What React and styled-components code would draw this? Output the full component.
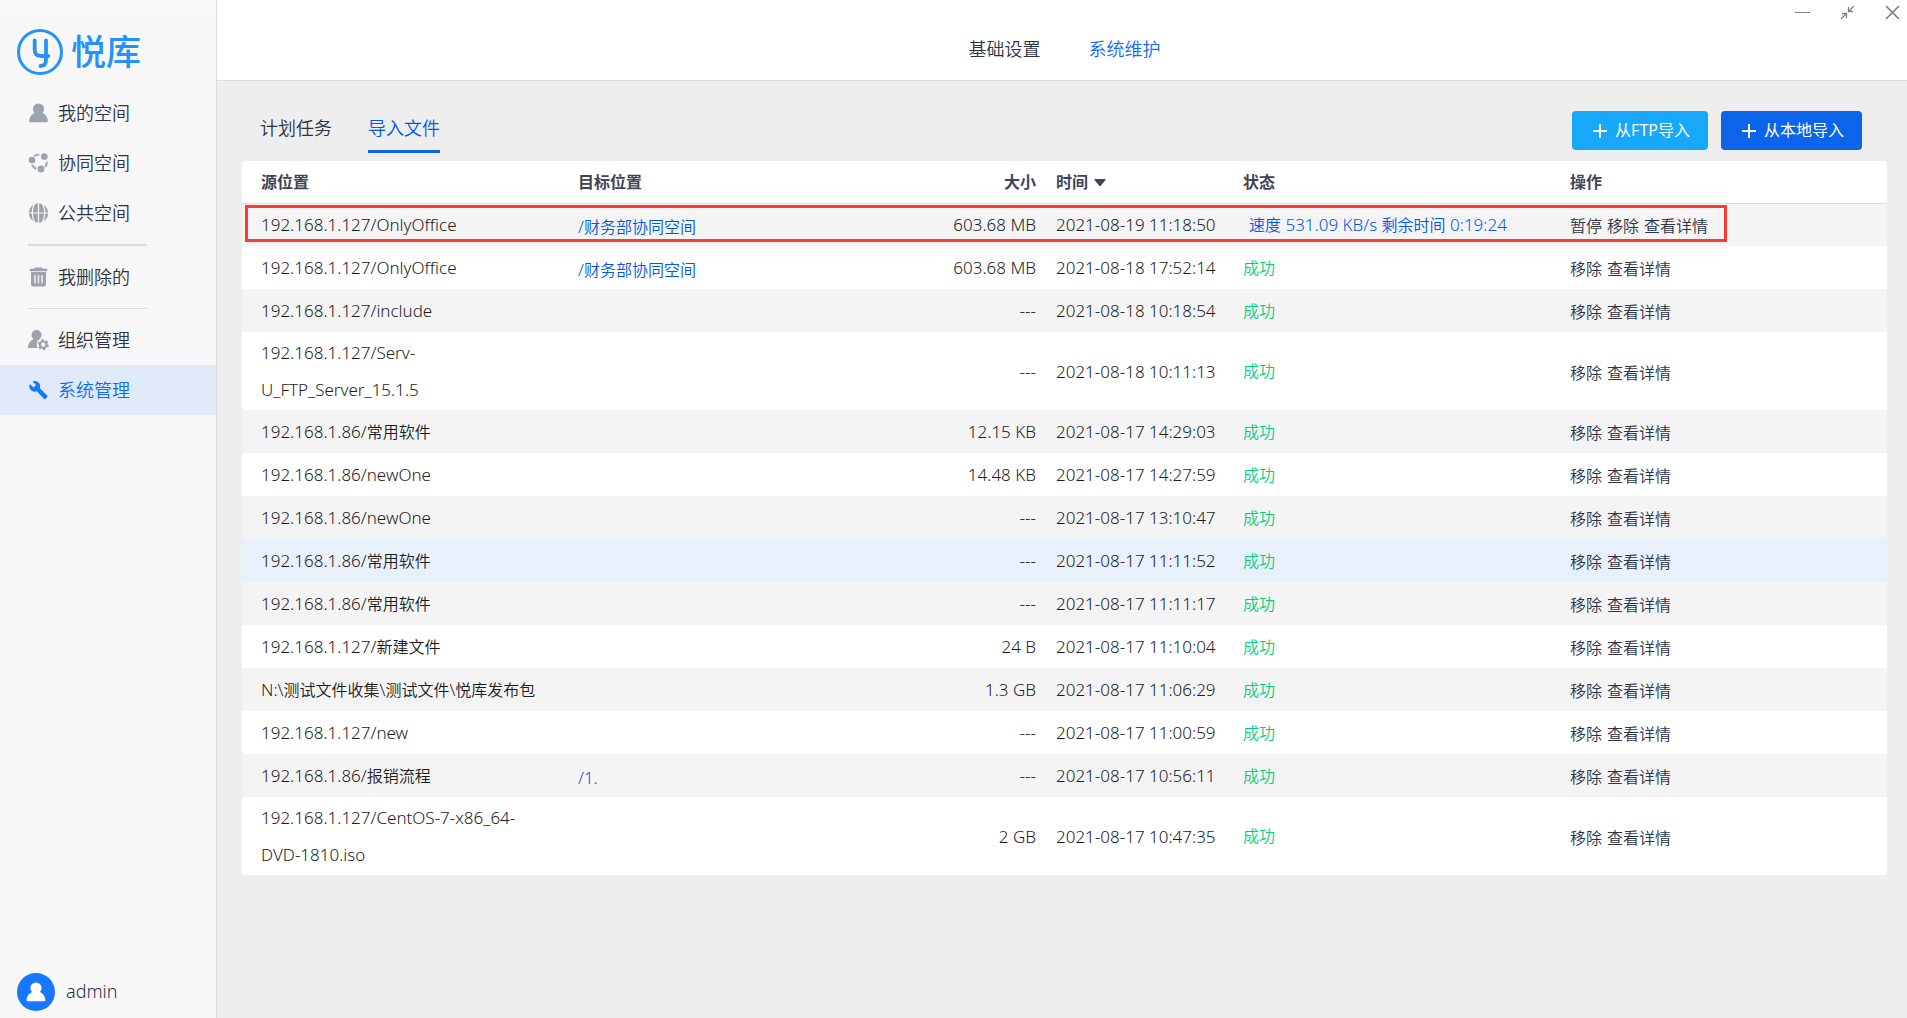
import React, { useState } from 'react'
import styled, { createGlobalStyle } from 'styled-components'

const GlobalStyle = createGlobalStyle`
  * {
    box-sizing: border-box;
  }

  body {
    margin: 0;
    color: #1c1c1c;
    background: #eee;
    font-family: "Noto Sans", "Noto Sans CJK SC", sans-serif;
    font-size: 16px;
    font-weight: 350;
  }

  button {
    padding: 0;
    border: 0;
    background: none;
    color: inherit;
    font: inherit;
    cursor: pointer;
  }

  a {
    text-decoration: none;
  }
`

const tasks = [
  { source: '192.168.1.127/OnlyOffice', target: '/财务部协同空间', size: '603.68 MB', time: '2021-08-19 11:18:50', progress: '速度 531.09 KB/s 剩余时间 0:19:24' },
  { source: '192.168.1.127/OnlyOffice', target: '/财务部协同空间', size: '603.68 MB', time: '2021-08-18 17:52:14' },
  { source: '192.168.1.127/include', size: '---', time: '2021-08-18 10:18:54' },
  { source: '192.168.1.127/Serv-U_FTP_Server_15.1.5', size: '---', time: '2021-08-18 10:11:13' },
  { source: '192.168.1.86/常用软件', size: '12.15 KB', time: '2021-08-17 14:29:03' },
  { source: '192.168.1.86/newOne', size: '14.48 KB', time: '2021-08-17 14:27:59' },
  { source: '192.168.1.86/newOne', size: '---', time: '2021-08-17 13:10:47' },
  { source: '192.168.1.86/常用软件', size: '---', time: '2021-08-17 11:11:52', active: true },
  { source: '192.168.1.86/常用软件', size: '---', time: '2021-08-17 11:11:17' },
  { source: '192.168.1.127/新建文件', size: '24 B', time: '2021-08-17 11:10:04' },
  { source: 'N:\\测试文件收集\\测试文件\\悦库发布包', size: '1.3 GB', time: '2021-08-17 11:06:29' },
  { source: '192.168.1.127/new', size: '---', time: '2021-08-17 11:00:59' },
  { source: '192.168.1.86/报销流程', target: '/1.', size: '---', time: '2021-08-17 10:56:11' },
  { source: '192.168.1.127/CentOS-7-x86_64-DVD-1810.iso', size: '2 GB', time: '2021-08-17 10:47:35' },
]

// Latin runs are set one pixel larger than the Chinese ones
const mixed = (text) =>
  text.split(/([\u4e00-\u9fff]+)/).map((part, index) =>
    index % 2 ? <Han key={index}>{part}</Han> : part
  )

const UserIcon = ({ size = 20 }) => (
  <svg width={size} height={size} viewBox="0 0 20 20" fill="currentColor" aria-hidden="true">
    <circle cx="10" cy="6" r="5.6" />
    <path d="M6.8 9.6h6.4c3.4 1.6 6 4.6 6.2 8.2 0 1-.3 1.4-1.2 1.4H1.8c-.9 0-1.2-.4-1.2-1.4.2-3.6 2.8-6.6 6.2-8.2z" />
  </svg>
)

const ShareIcon = () => (
  <svg width="20" height="20" viewBox="0 0 20 20" fill="none" aria-hidden="true">
    <path d="M5.6 3.1Q8.3 1.300 10.700 1.900M18.300 8.700Q18.700 11.800 16.800 14M3.400 11.600Q4.600 14.400 7.800 15.900" stroke="currentColor" strokeWidth="1.900" />
    <circle cx="15.800" cy="3.600" r="3.400" fill="currentColor" />
    <circle cx="3.500" cy="7" r="3.300" fill="currentColor" />
    <circle cx="12.500" cy="16" r="3.400" fill="currentColor" />
  </svg>
)

const GlobeIcon = () => (
  <svg width="20" height="20" viewBox="0 0 20 20" fill="none" stroke="#f7f7f7" strokeWidth="1.200" aria-hidden="true">
    <circle cx="10" cy="10" r="9.700" fill="currentColor" stroke="none" />
    <path d="M10 0v20M0 10h20M6.500 0C2.800 6 2.800 14 6.500 20M13.500 0c3.700 6 3.700 14 0 20" />
  </svg>
)

const TrashIcon = () => (
  <svg width="20" height="20" viewBox="0 0 20 20" fill="currentColor" aria-hidden="true">
    <path d="M6.500.6h7l.8 1.200h3.500c.7 0 1 .4 1 1v1.400H1.200V2.800c0-.6.3-1 1-1h3.500z" />
    <path fillRule="evenodd" d="M2.500 5h15v12.200c0 1.400-.9 2.200-2.200 2.200H4.700c-1.300 0-2.200-.8-2.200-2.200zM5.800 8.200v8h1.400v-8zm3.500 0v8h1.400v-8zm3.500 0v8h1.400v-8z" />
  </svg>
)

const OrgIcon = () => (
  <svg width="21" height="20" viewBox="0 0 21 20" fill="currentColor" aria-hidden="true">
    <circle cx="8.500" cy="5" r="5" />
    <path d="M5.500 9h6c-2.600 1.600-3.500 5-2 9H0c0-4.200 2.400-7.400 5.500-9z" />
    <circle cx="15.200" cy="14.700" r="3.200" fill="none" stroke="currentColor" strokeWidth="2.200" />
    <circle cx="15.200" cy="14.700" r="4.700" fill="none" stroke="currentColor" strokeWidth="1.800" strokeDasharray="2.460 2.460" />
  </svg>
)

const WrenchIcon = () => (
  <svg width="20" height="20" viewBox="0 0 24 24" fill="currentColor" aria-hidden="true">
    <path d="M22.700 19l-9.100-9.100c.9-2.300.4-5-1.500-6.900-2-2-5-2.400-7.400-1.300L9 6 6 9 1.600 4.700C.4 7.100.9 10.100 2.900 12.100c1.900 1.900 4.600 2.400 6.900 1.500l9.100 9.100c.4.4 1 .4 1.400 0l2.300-2.300c.5-.4.5-1.100.1-1.400z" />
  </svg>
)

const PlusIcon = () => (
  <svg width="14" height="14" viewBox="0 0 14 14" stroke="currentColor" strokeWidth="2" aria-hidden="true">
    <path d="M7 0v14M0 7h14" />
  </svg>
)

const menu = [
  { name: '我的空间', icon: <UserIcon /> },
  { name: '协同空间', icon: <ShareIcon /> },
  { name: '公共空间', icon: <GlobeIcon /> },
  { divider: 2 },
  { name: '我删除的', icon: <TrashIcon /> },
  { divider: 1 },
  { name: '组织管理', icon: <OrgIcon /> },
  { name: '系统管理', icon: <WrenchIcon /> },
]

function Sidebar() {
  const [current, setCurrent] = useState('系统管理')

  return (
    <Side>
      <Logo>
        <svg width="46" height="46" viewBox="0 0 46 46" fill="none" stroke="currentColor" aria-hidden="true">
          <circle cx="23" cy="23" r="21.500" strokeWidth="3" />
          <path d="M17.700 11.500v9q0 6.500 6.500 6.500h7M29 11.500v19q0 6.500-5.500 6.500" strokeWidth="3.800" strokeLinecap="round" />
        </svg>
        <span>悦库</span>
      </Logo>
      <Menu>
        {menu.map((item, index) =>
          item.divider ? (
            <Divider key={index} $size={item.divider} />
          ) : (
            <MenuItem
              key={item.name}
              href="#"
              $active={item.name === current}
              onClick={() => setCurrent(item.name)}
            >
              {item.icon}
              <Label>{item.name}</Label>
            </MenuItem>
          )
        )}
      </Menu>
      <Account>
        <Avatar>
          <UserIcon />
        </Avatar>
        <Label>admin</Label>
      </Account>
    </Side>
  )
}

function TaskTable() {
  return (
    <Panel>
      <Table>
        <colgroup>
          <Col $width="326px" />
          <Col />
          <Col $width="160px" />
          <Col $width="187px" />
          <Col $width="327px" />
          <Col $width="327px" />
        </colgroup>
        <thead>
          <tr>
            <Th>源位置</Th>
            <Th>目标位置</Th>
            <Th $right>大小</Th>
            <Th>
              <SortButton>
                时间
                <svg width="12" height="7" viewBox="0 0 12 7" fill="currentColor" aria-hidden="true">
                  <path d="M1 0h10q1 0 .5 1L7 6.500q-1 1-2 0L.5 1Q0 0 1 0z" />
                </svg>
              </SortButton>
            </Th>
            <Th>状态</Th>
            <Th>操作</Th>
          </tr>
        </thead>
        <tbody>
          {tasks.map((task) => (
            <Row key={task.time} $active={task.active}>
              <Td>{mixed(task.source)}</Td>
              <Td $low>{task.target && <TargetLink href="#">{mixed(task.target)}</TargetLink>}</Td>
              <Td $right>{task.size}</Td>
              <Td>{task.time}</Td>
              <Td>
                {task.progress ? <Progress>{mixed(task.progress)}</Progress> : <Success>成功</Success>}
              </Td>
              <Td $low>
                <Actions>
                  {task.progress && <button>暂停</button>}
                  <button>移除</button>
                  <button>查看详情</button>
                </Actions>
              </Td>
            </Row>
          ))}
        </tbody>
      </Table>
      <Marker />
    </Panel>
  )
}

function App() {
  const [tab, setTab] = useState('导入文件')

  return (
    <Layout>
      <GlobalStyle />
      <Sidebar />
      <Main>
        <Header>
          <Nav>
            <NavLink href="#">基础设置</NavLink>
            <NavLink href="#" $active>系统维护</NavLink>
          </Nav>
          <WindowControls>
            <button aria-label="最小化">
              <svg width="15" height="15" viewBox="0 0 15 15" stroke="currentColor">
                <path d="M0 7.500h15" />
              </svg>
            </button>
            <button aria-label="还原">
              <svg width="15" height="15" viewBox="0 0 15 15" fill="none" stroke="currentColor" strokeWidth="1.300">
                <path d="M14 1L8.500 6.500M8.500 2v4.500H13M1 14l5.500-5.500M2 8.500h4.500V13" />
              </svg>
            </button>
            <button aria-label="关闭">
              <svg width="15" height="15" viewBox="0 0 15 15" stroke="currentColor" strokeWidth="1.700">
                <path d="M1 1l13 13M14 1L1 14" />
              </svg>
            </button>
          </WindowControls>
        </Header>
        <Content>
          <Toolbar>
            <Tabs>
              {['计划任务', '导入文件'].map((name) => (
                <Tab key={name} $active={name === tab} onClick={() => setTab(name)}>
                  {name}
                </Tab>
              ))}
            </Tabs>
            <Buttons>
              <ImportButton $color="#17a8fa">
                <PlusIcon />
                <Label>从FTP导入</Label>
              </ImportButton>
              <ImportButton $color="#0c64eb">
                <PlusIcon />
                <Label>从本地导入</Label>
              </ImportButton>
            </Buttons>
          </Toolbar>
          <TaskTable />
        </Content>
      </Main>
    </Layout>
  )
}

const Layout = styled.div`
  display: flex;
  min-height: 100vh;
`

const Side = styled.aside`
  display: flex;
  flex-direction: column;
  flex: none;
  width: 217px;
  border-right: 1px solid #dcdcdc;
  background: linear-gradient(#f9f9f9 18px, #f7f7f7 18px);
  color: #2c3347;
  font-size: 18px;
`

const Logo = styled.div`
  display: flex;
  align-items: center;
  gap: 8px;
  height: 88px;
  padding: 16px 0 0 17px;
  color: #2492fd;
  font-size: 35px;
  font-weight: 500;
  line-height: 46px;
`

const Menu = styled.nav`
  flex: 1;
`

const MenuItem = styled.a`
  display: flex;
  align-items: center;
  gap: 9px;
  height: 50px;
  padding-left: 28px;
  background: ${(props) => (props.$active ? '#dfe9f8' : 'transparent')};
  color: ${(props) => (props.$active ? '#0a6cff' : '#2c3347')};

  svg {
    width: 21px;
    color: ${(props) => (props.$active ? '#1778ff' : '#9ca3af')};
  }
`

const Label = styled.span`
  padding-bottom: 3px;
`

const Divider = styled.hr`
  width: 119px;
  height: ${(props) => props.$size}px;
  margin: 6px 28px;
  border: 0;
  background: #dcdcdc;
`

const Account = styled.div`
  display: flex;
  align-items: center;
  gap: 11px;
  padding: 0 0 7px 17px;
`

const Avatar = styled.span`
  display: flex;
  align-items: center;
  justify-content: center;
  width: 38px;
  height: 38px;
  border-radius: 50%;
  background: #1778ff;
  color: #fff;
`

const Main = styled.main`
  flex: 1;
  min-width: 0;
`

const Header = styled.header`
  display: grid;
  grid-template-columns: 1fr auto 1fr;
  height: 81px;
  border-bottom: 1px solid #dcdcdc;
  background: #fff;
`

const Nav = styled.nav`
  display: flex;
  grid-column: 2;
  align-items: center;
  gap: 48px;
  padding: 16px 0 0 5px;
`

const NavLink = styled.a`
  color: ${(props) => (props.$active ? '#0a6cff' : '#2c3347')};
  font-size: 18px;
`

const WindowControls = styled.div`
  display: flex;
  justify-self: end;
  align-self: start;
  gap: 30px;
  padding: 5px 7px 0 0;
  color: #808080;

  svg {
    display: block;
  }
`

const Content = styled.div`
  padding: 24px 20px 24px 25px;
`

const Toolbar = styled.div`
  display: flex;
  justify-content: space-between;
  padding: 0 25px 8px 18px;
`

const Tabs = styled.div`
  display: flex;
  gap: 36px;
`

const Tab = styled.button`
  height: 48px;
  padding-bottom: 2px;
  border-bottom: 3px solid ${(props) => (props.$active ? '#0c64eb' : 'transparent')};
  color: ${(props) => (props.$active ? '#0058e8' : '#2c3347')};
  font-size: 18px;
`

const Buttons = styled.div`
  display: flex;
  align-items: flex-start;
  gap: 13px;
  padding-top: 6px;
`

const ImportButton = styled.button`
  display: flex;
  align-items: center;
  gap: 8px;
  height: 39px;
  padding: 0 18px 0 21px;
  border-radius: 4px;
  background: ${(props) => props.$color};
  color: #fff;
  font-weight: 400;
`

const Panel = styled.div`
  position: relative;
  overflow: hidden;
  border-radius: 4px 4px 0 0;
  background: #fff;
`

const Table = styled.table`
  width: 100%;
  border-collapse: collapse;
  table-layout: fixed;
`

const Col = styled.col`
  width: ${(props) => props.$width || 'auto'};
`

const Th = styled.th`
  height: 42px;
  padding: 0 10px 2px;
  border-bottom: 1px solid #dcdcdc;
  color: #3f4557;
  font-weight: 600;
  text-align: ${(props) => (props.$right ? 'right' : 'left')};

  &:first-child {
    padding-left: 19px;
  }
`

const SortButton = styled.button`
  display: flex;
  align-items: center;
  gap: 6px;

  svg {
    margin-top: 3px;
  }
`

const Row = styled.tr`
  background: ${(props) => (props.$active ? '#e8f0fb' : '#fff')};

  &:nth-child(odd) {
    background: #f4f4f4;
  }
`

const Td = styled.td`
  height: 43px;
  padding: ${(props) => (props.$low ? '4px 10px 0' : '2px 10px')};
  font-size: 17px;
  line-height: 37px;
  text-align: ${(props) => (props.$right ? 'right' : 'left')};

  &:first-child {
    padding-right: 20px;
    padding-left: 19px;
  }
`

const Han = styled.span`
  font-size: 16px;
`

const TargetLink = styled.a`
  color: #0058e8;
`

const Progress = styled.span`
  padding-left: 6px;
  color: #0058e8;
`

const Success = styled.span`
  color: #00d07c;
  font-size: 16px;
`

const Actions = styled.div`
  display: flex;
  gap: 5px;
  color: #2c3347;
  font-size: 16px;
`

// frame round the import that is still running
const Marker = styled.div`
  position: absolute;
  top: 44px;
  right: 160px;
  left: 3px;
  height: 37px;
  border: 3px solid #fc3a37;
  pointer-events: none;
`

export default App
